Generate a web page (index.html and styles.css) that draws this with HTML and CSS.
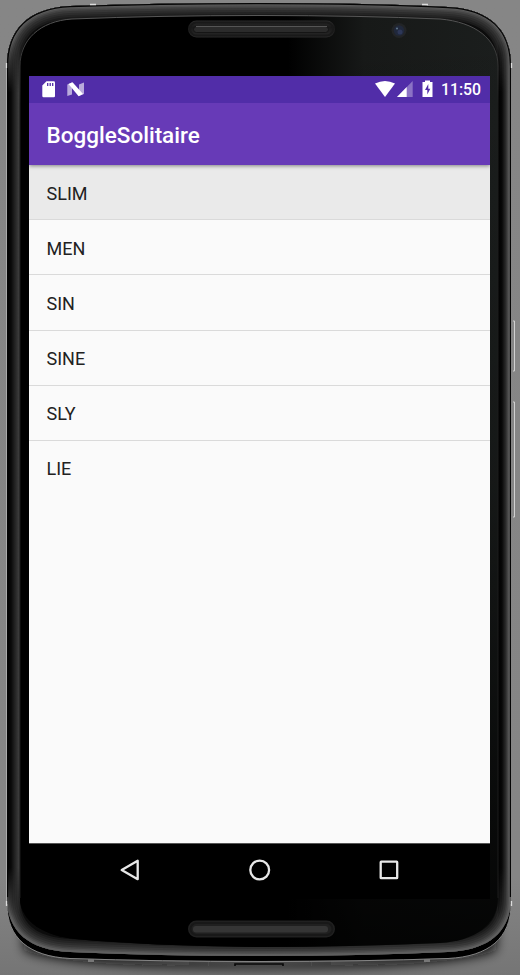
FILE: index.html
```html
<!DOCTYPE html>
<html lang="en">
<head>
<meta charset="utf-8">
<title>BoggleSolitaire</title>
<link rel="stylesheet" href="styles.css">
</head>
<body>
<svg class="device" viewBox="0 0 520 975" aria-hidden="true">
  <defs>
    <path id="shell" d="M7 66C7 30 28 8 70 6Q160 3 260 3Q370 3 448 7C490 9 511 30 511 66V904C511 938 489 957 448 958Q360 961 260 961Q160 961 70 958C29 956 7 938 7 904Z"/>
    <path id="bevel" d="M7 66C7 30 28 8 70 6Q160 3 260 3Q370 3 448 7C490 9 511 30 511 66V897C511 932 489 950 448 952Q360 956 260 956Q160 956 70 952C29 950 7 932 7 897Z"/>
    <path id="glass" d="M20 66C20 40 40 21 72 19Q160 15.500 260 15.500Q360 15.500 440 19C475 22 498 39 498 66V898C498 925 475 941 440 943Q350 947 260 947Q150 946 75 939C45 936 20 922 20 898Z"/>
    <path id="glassTop" d="M20 898V66C20 40 40 21 72 19Q160 15.500 260 15.500Q360 15.500 440 19C475 22 498 39 498 66V898"/>
    <clipPath id="bevelClip"><use href="#bevel"/></clipPath>
    <linearGradient id="backdrop" x2="0" y2="1"><stop offset="0" stop-color="#868686"/><stop offset=".9" stop-color="#858585"/><stop offset="1" stop-color="#757575"/></linearGradient>
    <linearGradient id="glassFill"><stop offset="0" stop-color="#000"/><stop offset=".56" stop-color="#000"/><stop offset=".72" stop-color="#171918"/><stop offset="1" stop-color="#1b1e1d"/></linearGradient>
    <linearGradient id="glassFade" x2="0" y2="1"><stop offset="0" stop-color="#000" stop-opacity="0"/><stop offset=".5" stop-color="#000" stop-opacity=".2"/><stop offset="1" stop-color="#000" stop-opacity=".85"/></linearGradient>
    <linearGradient id="rimLight" gradientUnits="userSpaceOnUse" x1="0" y1="15" x2="0" y2="900"><stop offset="0" stop-color="#585858"/><stop offset=".05" stop-color="#363636"/><stop offset=".1" stop-color="#1c1c1c"/><stop offset="1" stop-color="#1c1c1c"/></linearGradient>
    <linearGradient id="leftSide"><stop offset="0" stop-color="#000"/><stop offset=".3" stop-color="#090909"/><stop offset=".55" stop-color="#202020"/><stop offset=".88" stop-color="#3c3c3c"/><stop offset="1" stop-color="#2c2c2c"/></linearGradient>
    <linearGradient id="rightSide"><stop offset="0" stop-color="#000"/><stop offset=".3" stop-color="#080808"/><stop offset=".6" stop-color="#2c2c2c"/><stop offset=".9" stop-color="#646464"/><stop offset="1" stop-color="#555"/></linearGradient>
    <linearGradient id="sideFade" x2="0" y2="1"><stop offset="0" stop-color="#000"/><stop offset=".06" stop-color="#fff"/><stop offset=".94" stop-color="#fff"/><stop offset="1" stop-color="#000"/></linearGradient>
    <mask id="sideMask" maskUnits="userSpaceOnUse" x="0" y="40" width="520" height="880"><rect y="40" width="520" height="880" fill="url(#sideFade)"/></mask>
    <linearGradient id="pill" x2="0" y2="1"><stop offset="0" stop-color="#2b2b2b"/><stop offset=".4" stop-color="#1a1a1a"/><stop offset="1" stop-color="#292929"/></linearGradient>
    <filter id="soft" x="-20%" y="-20%" width="140%" height="140%"><feGaussianBlur stdDeviation="6"/></filter>
  </defs>
  <rect width="520" height="975" fill="url(#backdrop)"/>
  <path d="M24 915Q60 960 260 962Q460 960 496 915V950Q460 967 260 968Q60 967 24 950Z" fill="#111" filter="url(#soft)"/>
  <use href="#shell" fill="#000"/>
  <g clip-path="url(#bevelClip)" fill="none">
    <use href="#bevel" fill="#0c0c0c"/>
    <use href="#bevel" stroke="#1b1b1b" stroke-width="26"/>
    <use href="#bevel" stroke="#242424" stroke-width="22"/>
    <use href="#bevel" stroke="#2d2d2d" stroke-width="18"/>
    <use href="#bevel" stroke="#373737" stroke-width="14"/>
    <use href="#bevel" stroke="#434343" stroke-width="10"/>
    <use href="#bevel" stroke="#505050" stroke-width="7"/>
    <use href="#bevel" stroke="#5e5e5e" stroke-width="4"/>
    <g mask="url(#sideMask)">
      <rect x="7" y="40" width="13.500" height="880" fill="url(#leftSide)"/>
      <rect x="498" y="40" width="13" height="880" fill="url(#rightSide)"/>
    </g>
    <path d="M7 897V66C7 30 28 8 70 6Q160 3 260 3Q370 3 448 7C490 9 511 30 511 66V897" stroke="#050505" stroke-width="2.400"/>
  </g>
  <use href="#glass" fill="url(#glassFill)"/>
  <use href="#glass" fill="url(#glassFade)"/>
  <use href="#glassTop" fill="none" stroke="url(#rimLight)"/>
  <path d="M7 904C7 938 29 956.500 70 958.500Q160 961.500 260 961.500Q360 961.500 448 958.500C489 956.500 511 938 511 904" fill="none" stroke="#858585"/>
  <path d="M6.500 64V905" stroke="#aaa"/>
  <path d="M90 4.500h6M422 4.500h6M6.500 63v5M511.500 63v5M6.500 901v5M511.500 901v5" stroke="#ddd" stroke-width="1.300"/>
  <path d="M88 960.500h6M424 960.500h6" stroke="#777" stroke-width="3"/>
  <path d="M235 966v-2h48v2" fill="none" stroke="#080808" stroke-width="1.600"/>
  <path d="M513 321h1.500v50H513M513 402h1.500v115H513" fill="none" stroke="#d0d0d0"/>
  <rect x="188" y="20.500" width="147" height="17" rx="8.500" fill="url(#pill)"/>
  <rect x="190" y="22.500" width="143" height="13" rx="6.500" fill="none" stroke="#191919" stroke-width="2"/>
  <rect x="193.500" y="26.500" width="135" height="6" rx="3" fill="#2b2b2b" stroke="#151515"/>
  <path d="M196 26.500h131" stroke="#555"/>
  <rect x="188" y="920.500" width="147" height="17" rx="8.500" fill="#202020"/>
  <rect x="190.500" y="923" width="142" height="12" rx="6" fill="none" stroke="#181818" stroke-width="2"/>
  <rect x="193" y="926" width="135" height="6.500" rx="3" fill="#353535"/>
  <circle cx="399" cy="30.500" r="7.500" fill="#222426"/>
  <circle cx="399" cy="30.500" r="5.200" fill="#20283b"/>
  <circle cx="400" cy="32" r="2.500" fill="#2d3758"/>
  <circle cx="397" cy="28.500" r="1" fill="#60778b"/>
</svg>
<main class="screen">
  <header class="status">
    <svg class="status-left" viewBox="29 76 80 27">
      <path d="M46.500 81.200h7.200q1.300 0 1.300 1.300V96q0 1.200-1.300 1.200H43.500q-1.200 0-1.200-1.200V85.500z" fill="#fff"/>
      <path d="M47.700 83v3M50.200 83v3M52.700 83v3" stroke="#512da8" stroke-width="1.300"/>
      <path d="M67.300 84.500L72 82.500V94.500L67.300 96zM79 84.500L84 82.500V94L79 96z" fill="#b9abdc"/>
      <path d="M68.500 84L72.500 82.300L83 94L78.600 96.200z" fill="#fff"/>
    </svg>
    <svg class="status-right" viewBox="370 76 68 27">
      <path d="M375 83.500Q385 78.500 395 83.500L385 97z" fill="#fff"/>
      <path d="M412.700 81v16H397z" fill="#8b72c5"/>
      <path d="M406.700 87.100V97H397z" fill="#fff"/>
      <path d="M422.500 82h2.500v-1.500h5V82h2.500v15h-10z" fill="#fff"/>
      <path d="M428.300 84l-3.300 6h2.300v4.500l3-5.800h-2z" fill="#512da8"/>
    </svg>
    <time class="clock">11:50</time>
  </header>
  <h1 class="toolbar">BoggleSolitaire</h1>
  <ul class="words">
    <li class="word selected">SLIM</li>
    <li class="word">MEN</li>
    <li class="word">SIN</li>
    <li class="word">SINE</li>
    <li class="word">SLY</li>
    <li class="word">LIE</li>
  </ul>
  <nav class="nav">
    <svg class="nav-icon" viewBox="0 0 24 24"><path d="M3.700 12L19.700 2.800V21.200z"/></svg>
    <svg class="nav-icon" viewBox="0 0 24 24"><circle cx="11.700" cy="12" r="9.400"/></svg>
    <svg class="nav-icon" viewBox="0 0 24 24"><rect x="3.700" y="3.700" width="16.500" height="16.500" rx=".5"/></svg>
  </nav>
</main>
</body>
</html>
```
FILE: styles.css
```css
* { box-sizing: border-box; }

body {
  margin: 0;
  width: 520px;
  height: 975px;
  padding: 76px 30px 0 29px;
  overflow: hidden;
  font-family: Roboto, "Liberation Sans", sans-serif;
}

.device {
  position: absolute;
  inset: 0;
  width: 520px;
  height: 975px;
}

.screen {
  position: relative;
  width: 461px;
  height: 823px;
  display: flex;
  flex-direction: column;
  background: #fafafa;
}

.status {
  height: 27px;
  flex: none;
  display: flex;
  align-items: center;
  background: #512da8;
  color: #fff;
}

.status-left { width: 80px; height: 27px; }
.status-right { width: 68px; height: 27px; margin-left: auto; }

.clock {
  width: 52px;
  padding-left: 3px;
  font-size: 15.8px;
  font-weight: 500;
  line-height: 27px;
}

.toolbar {
  height: 62px;
  flex: none;
  margin: 0;
  padding: 1px 17.5px 0;
  background: #673ab7;
  color: #fff;
  font-size: 22.5px;
  font-weight: 500;
  line-height: 63px;
  box-shadow: 0 1px 4px rgba(0, 0, 0, .45);
  clip-path: inset(0 0 -8px 0);
  z-index: 1;
}

.words {
  flex: 1;
  margin: 0;
  padding: 0;
  list-style: none;
}

.word {
  height: 55.18px;
  padding: .55px 17.5px 0;
  border-bottom: 1px solid #dadada;
  color: #212121;
  font-size: 18px;
  line-height: 55px;
}

.word:last-child { border-bottom: 0; }
.selected { background: #eaeaea; }

.nav {
  height: 56px;
  flex: none;
  display: flex;
  align-items: center;
  justify-content: space-between;
  padding: 0 89px 3px;
  border-top: 1px solid #555;
  background: #000;
}

.nav-icon {
  width: 24px;
  height: 24px;
  fill: none;
  stroke: #e8e8e8;
  stroke-width: 2.3;
  stroke-linejoin: round;
}
```
